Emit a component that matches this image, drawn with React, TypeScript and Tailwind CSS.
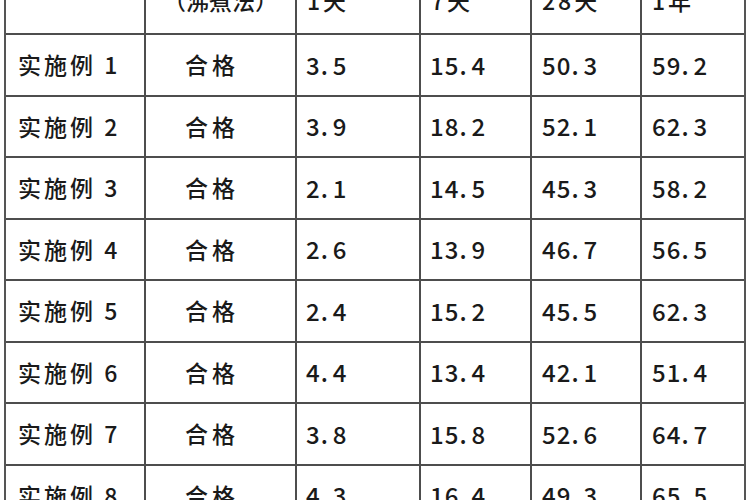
import React from 'react';

const rows = [
  ['1', '3.5', '15.4', '50.3', '59.2'],
  ['2', '3.9', '18.2', '52.1', '62.3'],
  ['3', '2.1', '14.5', '45.3', '58.2'],
  ['4', '2.6', '13.9', '46.7', '56.5'],
  ['5', '2.4', '15.2', '45.5', '62.3'],
  ['6', '4.4', '13.4', '42.1', '51.4'],
  ['7', '3.8', '15.8', '52.6', '64.7'],
  ['8', '4.3', '16.4', '49.3', '65.5'],
];

const grid = 'grid grid-cols-[140px_151px_124px_111px_110px_102px] border-b-2 border-[#4d4d4d]';
const cell = 'flex items-center border-r-2 border-[#4d4d4d]';
const last = 'flex items-center';

// puts a small gap after the decimal point, like the source font does
const Num = ({ v }: { v: string }) => {
  const [a, b] = v.split('.');
  return (
    <span className="text-[24px] tracking-[1px]">
      {a}
      <span className="mr-[4px]">.</span>
      {b}
    </span>
  );
};

const App = () => {
  return (
    <div
      className="w-[750px] h-[500px] overflow-hidden bg-white text-[#1a1a1a] text-[23px] font-medium leading-none"
      style={{ fontFamily: '"Noto Sans CJK SC", "Noto Sans", sans-serif' }}
    >
      <div className="ml-[4px] w-[742px] border-x-2 border-[#555] -mt-[27px]">
        <div className={classNames(grid, 'h-[62px]')}>
          <div className={cell}></div>
          <div className={classNames(cell, 'justify-center pb-[6px]')}>（沸煮法）</div>
          <div className={classNames(cell, 'pl-[10px] pb-[6px] tracking-[3px]')}>1天</div>
          <div className={classNames(cell, 'pl-[10px] pb-[6px] tracking-[3px]')}>7天</div>
          <div className={classNames(cell, 'pl-[10px] pb-[6px] tracking-[3px]')}>28天</div>
          <div className={classNames(last, 'pl-[10px] pb-[6px] tracking-[3px]')}>1年</div>
        </div>
        {rows.map((r) => (
          <div key={r[0]} className={classNames(grid, 'h-[61.5px]')}>
            <div className={classNames(cell, 'pl-[12px] tracking-[3px]')}>
              实施例 {r[0]}
            </div>
            <div className={classNames(cell, 'pl-[39px] tracking-[4px]')}>合格</div>
            <div className={classNames(cell, 'pl-[9px]')}>
              <Num v={r[1]} />
            </div>
            <div className={classNames(cell, 'pl-[9px]')}>
              <Num v={r[2]} />
            </div>
            <div className={classNames(cell, 'pl-[10px]')}>
              <Num v={r[3]} />
            </div>
            <div className={classNames(last, 'pl-[10px]')}>
              <Num v={r[4]} />
            </div>
          </div>
        ))}
      </div>
    </div>
  );
};

function classNames(...c: string[]) {
  return c.filter(Boolean).join(' ');
}

export default App;
